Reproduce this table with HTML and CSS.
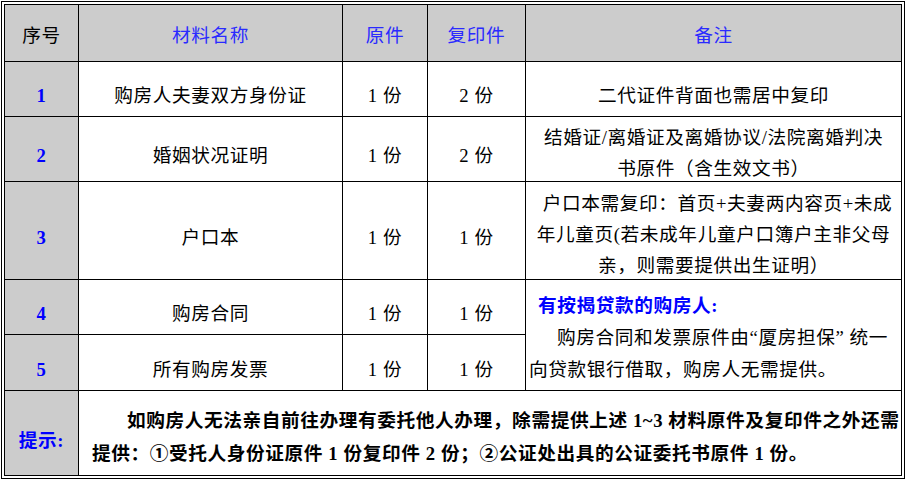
FILE: index.html
```html
<!DOCTYPE html>
<html lang="zh-CN">
<head>
<meta charset="utf-8">
<title>购房材料清单</title>
<link rel="stylesheet" href="styles.css">
</head>
<body>
<div class="sheet">
  <div class="cell head gray plain">序号</div>
  <div class="cell head gray">材料名称</div>
  <div class="cell head gray">原件</div>
  <div class="cell head gray">复印件</div>
  <div class="cell head gray end">备注</div>

  <div class="cell gray idx">1</div>
  <div class="cell">购房人夫妻双方身份证</div>
  <div class="cell">1 份</div>
  <div class="cell">2 份</div>
  <div class="cell end">二代证件背面也需居中复印</div>

  <div class="cell gray idx">2</div>
  <div class="cell">婚姻状况证明</div>
  <div class="cell">1 份</div>
  <div class="cell">2 份</div>
  <div class="cell end multi"><div class="lines">结婚证/离婚证及离婚协议/法院离婚判决<br>书原件（含生效文书）</div></div>

  <div class="cell gray idx">3</div>
  <div class="cell">户口本</div>
  <div class="cell">1 份</div>
  <div class="cell">1 份</div>
  <div class="cell end multi"><div class="lines"><span class="l1">户口本需复印：首页+夫妻两内容页+未成</span><br>年儿童页(若未成年儿童户口簿户主非父母<br>亲，则需要提供出生证明）</div></div>

  <div class="cell gray idx">4</div>
  <div class="cell">购房合同</div>
  <div class="cell">1 份</div>
  <div class="cell">1 份</div>
  <div class="cell end mort">
    <div class="mort-title">有按揭贷款的购房人:</div>
    <div class="mort-text">购房合同和发票原件由“厦房担保” 统一<br>向贷款银行借取，购房人无需提供。</div>
  </div>

  <div class="cell gray idx">5</div>
  <div class="cell">所有购房发票</div>
  <div class="cell">1 份</div>
  <div class="cell">1 份</div>

  <div class="cell gray idx tip-label last">提示:</div>
  <div class="cell end last tip">
    <p class="tip-text">如购房人无法亲自前往办理有委托他人办理，除需提供上述 1~3 材料原件及复印件之外还需<br>提供：①受托人身份证原件 1 份复印件 2 份；②公证处出具的公证委托书原件 1 份。</p>
  </div>
</div>
</body>
</html>
```

FILE: styles.css
```css
html, body {
  margin: 0;
  padding: 0;
  background: #ffffff;
}

body {
  font-family: "Liberation Serif", "Noto Sans CJK SC", serif;
  font-size: 18.67px;
  letter-spacing: 0.6px;
  color: #000000;
}

.sheet {
  box-sizing: border-box;
  width: 904px;
  height: 478px;
  margin: 1px 0 0 1px;
  border: 4px double #000000;
  display: grid;
  grid-template-columns: 74px 264px 85px 98px 375px;
  grid-template-rows: 57px 55px 65px 98px 55px 56px 84px;
}

.cell {
  box-sizing: border-box;
  border-right: 1px solid #000000;
  border-bottom: 1px solid #000000;
  display: flex;
  align-items: center;
  justify-content: center;
  text-align: center;
  white-space: nowrap;
  padding-top: 14px;
  line-height: 26px;
}

.cell.end {
  border-right: 0;
}

.cell.last {
  border-bottom: 0;
}

.gray {
  background: #cccccc;
}

.head {
  color: #2a2aff;
  padding-top: 5px;
}

.head.plain {
  color: #000000;
}

.idx {
  color: #0000ff;
  font-weight: bold;
}

.multi {
  line-height: 31px;
  padding-top: 8px;
}

.lines {
  text-align: center;
}

.lines .l1 {
  padding-left: 8px;
}

.mort {
  grid-row: span 2;
  flex-direction: column;
  align-items: stretch;
  justify-content: center;
  text-align: left;
  padding: 6px 0 0 3px;
  line-height: 32px;
}

.mort-title {
  padding-left: 9px;
  color: #0000ff;
  font-weight: bold;
}

.mort-text {
  text-indent: 28px;
}

.tip-label {
  padding-top: 16px;
}

.tip {
  grid-column: span 4;
  justify-content: flex-start;
  text-align: left;
  padding: 8px 0 0 13px;
}

.tip-text {
  margin: 0;
  line-height: 33px;
  font-weight: bold;
  text-indent: 35px;
}
```
